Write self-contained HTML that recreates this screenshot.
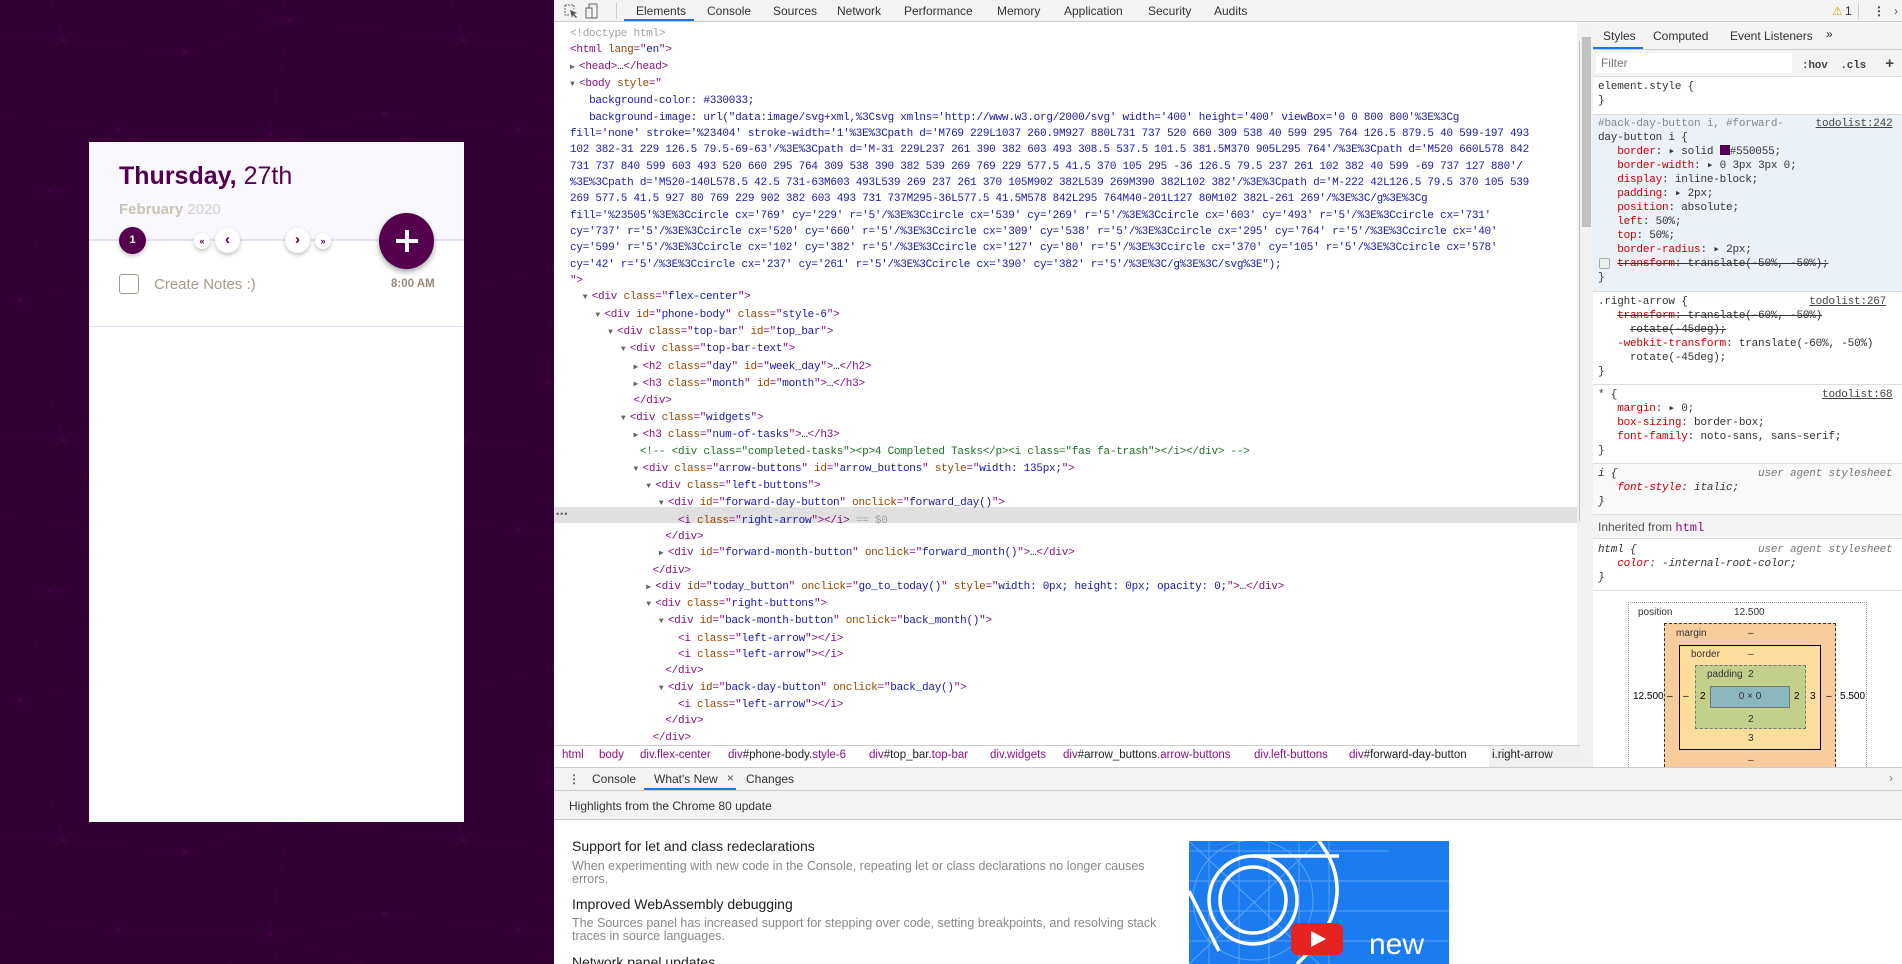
<!DOCTYPE html>
<html style="overflow:hidden;background:#330033"><head><meta charset="utf-8"><style>
*{margin:0;padding:0;box-sizing:border-box}
body{width:1902px;height:964px;overflow:hidden;position:relative;background:#330033;font-family:"Liberation Sans",sans-serif}
.abs{position:absolute}
#bg{position:absolute;left:0;top:0}
#phone{position:absolute;left:89px;top:142px;width:375px;height:680px;background:#fff}
#phone .top{position:absolute;left:0;top:0;width:375px;height:99px;background:#f9f8fe;border-bottom:2px solid #e8e0f0}
.circ{position:absolute;border-radius:50%;background:#fff;box-shadow:0 2px 4px rgba(0,0,0,.25);color:#55004f;font-weight:bold;text-align:center}
#dev{position:absolute;left:554px;top:0;width:1348px;height:964px;background:#fff;overflow:hidden}
.tabs{position:absolute;left:0;top:0;width:1348px;height:22px;background:#f3f3f3;border-bottom:1px solid #ccc;font-size:12px;color:#333}
.tabs span{position:absolute;top:4px}
.code{position:absolute;font-family:"Liberation Mono",monospace;font-size:11px;letter-spacing:-.25px;white-space:pre;line-height:16px;color:#222}
.t{color:#881280}.a{color:#994500}.v{color:#1a1aa6}.c{color:#236e25}.g{color:#a0a0a0}
.ar{display:inline-block;width:9px;font-size:8px;color:#666;letter-spacing:0}
.sty{position:absolute;font-family:"Liberation Mono",monospace;font-size:11px;letter-spacing:-.2px;white-space:pre;line-height:14px;color:#222}
.p{color:#c80000}
.bc{position:absolute;top:749px;font-size:11.5px;color:#881280}
</style></head><body>
<svg id="bg" width="554" height="964"><defs><pattern id="pt" width="400" height="400" patternUnits="userSpaceOnUse"><g transform="scale(.5)"><g fill="none" stroke="#3c003c" stroke-width="2"><path d="M769 229L1037 260.9M927 880L731 737 520 660 309 538 40 599 295 764 126.5 879.5 40 599-197 493 102 382-31 229 126.5 79.5-69-63"/><path d="M-31 229L237 261 390 382 603 493 308.5 537.5 101.5 381.5M370 905L295 764"/><path d="M520 660L578 842 731 737 840 599 603 493 520 660 295 764 309 538 390 382 539 269 769 229 577.5 41.5 370 105 295 -36 126.5 79.5 237 261 102 382 40 599 -69 737 127 880"/><path d="M520-140L578.5 42.5 731-63M603 493L539 269 237 261 370 105M902 382L539 269M390 382L102 382"/><path d="M-222 42L126.5 79.5 370 105 539 269 577.5 41.5 927 80 769 229 902 382 603 493 731 737M295-36L577.5 41.5M578 842L295 764M40-201L127 80M102 382L-261 269"/></g><g fill="#440044"><circle cx="769" cy="229" r="5"/><circle cx="539" cy="269" r="5"/><circle cx="603" cy="493" r="5"/><circle cx="731" cy="737" r="5"/><circle cx="520" cy="660" r="5"/><circle cx="309" cy="538" r="5"/><circle cx="295" cy="764" r="5"/><circle cx="40" cy="599" r="5"/><circle cx="102" cy="382" r="5"/><circle cx="127" cy="80" r="5"/><circle cx="370" cy="105" r="5"/><circle cx="578" cy="42" r="5"/><circle cx="237" cy="261" r="5"/><circle cx="390" cy="382" r="5"/></g></g></pattern></defs><rect width="554" height="964" fill="url(#pt)"/></svg>

<div id="phone">
 <div class="top"></div>
 <div class="abs" style="left:30px;top:20px;font-size:25px;color:#55004f;white-space:nowrap"><b>Thursday,</b> 27th</div>
 <div class="abs" style="left:30px;top:59px;font-size:15px;color:#c9c3b3;white-space:nowrap"><b>February</b> <span style="color:#d3d0c8">2020</span></div>
 <div class="circ" style="left:30px;top:85px;width:27px;height:27px;background:#55004f;color:#fff;font-size:11px;line-height:27px">1</div>
 <div class="circ" style="left:105px;top:91px;width:16px;height:16px;font-size:9px;line-height:16px">«</div>
 <div class="circ" style="left:126px;top:86px;width:25px;height:25px;font-size:15px;line-height:23px">‹</div>
 <div class="circ" style="left:196px;top:86px;width:25px;height:25px;font-size:15px;line-height:23px">›</div>
 <div class="circ" style="left:226px;top:91px;width:16px;height:16px;font-size:9px;line-height:16px">»</div>
 <div class="circ" style="left:290px;top:71px;width:55px;height:56px;background:#55004f;box-shadow:0 3px 6px rgba(0,0,0,.35)"><div class="abs" style="left:17px;top:26px;width:22px;height:4px;background:#fff"></div><div class="abs" style="left:26px;top:17px;width:4px;height:22px;background:#fff"></div></div>
 <div class="abs" style="left:30px;top:132px;width:20px;height:20px;border:1.5px solid #a09a8a;border-radius:3px"></div>
 <div class="abs" style="left:65px;top:134px;font-size:15px;color:#a89a88">Create Notes :)</div>
 <div class="abs" style="left:302px;top:136px;font-size:11.5px;font-weight:bold;color:#9c8a78">8:00 AM</div>
 <div class="abs" style="left:0;top:184px;width:375px;height:1px;background:#e8e0f0"></div>
</div>

<div id="dev">
 <div class="tabs">
  <svg class="abs" style="left:10px;top:4px" width="14" height="14"><path d="M1 1h9v4M1 1v10h4" fill="none" stroke="#666" stroke-dasharray="2 1"/><path d="M6 6l7 3-3 1 3 3-1 1-3-3-1 3z" fill="#555"/></svg>
  <svg class="abs" style="left:31px;top:3px" width="14" height="16"><rect x="4" y="1" width="8" height="14" fill="none" stroke="#666"/><rect x="1" y="5" width="6" height="10" fill="#f3f3f3" stroke="#666"/></svg>
  <div class="abs" style="left:62px;top:3px;width:1px;height:16px;background:#ccc"></div>
  <span style="left:82px;color:#333">Elements</span>
  <div class="abs" style="left:70px;top:19px;width:70px;height:2px;background:#1a73e8"></div>
  <span style="left:153px">Console</span><span style="left:219px">Sources</span><span style="left:283px">Network</span><span style="left:350px">Performance</span><span style="left:443px">Memory</span><span style="left:510px">Application</span><span style="left:594px">Security</span><span style="left:660px">Audits</span>
  <span style="left:1278px;color:#e0a000">⚠</span><span style="left:1291px">1</span>
  <div class="abs" style="left:1304px;top:3px;width:1px;height:16px;background:#ccc"></div>
  <span style="left:1319px;font-weight:bold">⋮</span><span style="left:1340px;color:#555">›</span>
 </div>

 <div class="abs" style="left:0;top:507px;width:1023px;height:16px;background:#e0e0e0"></div>
 <div class="abs" style="left:1023px;top:23px;width:13px;height:722px;background:#f1f1f1"></div>
 <div class="abs" style="left:1025px;top:41px;width:9px;height:480px;background:#c1c1c1"></div>
 <div class="code" style="left:16px;top:26px;line-height:16.33px"><span class="g">&lt;!doctype html&gt;</span>
<span class="t">&lt;html </span><span class="a">lang</span><span class="t">="</span><span class="v">en</span><span class="t">"&gt;</span>
<span class="ar">▶</span><span class="t">&lt;head&gt;</span>…<span class="t">&lt;/head&gt;</span>
<span class="ar">▼</span><span class="t">&lt;body </span><span class="a">style</span><span class="t">="</span>
   <span class="v">background-color: #330033;</span>
   <span class="v">background-image: url("data:image/svg+xml,%3Csvg xmlns='http://www.w3.org/2000/svg' width='400' height='400' viewBox='0 0 800 800'%3E%3Cg</span>
<span class="v">fill='none' stroke='%23404' stroke-width='1'%3E%3Cpath d='M769 229L1037 260.9M927 880L731 737 520 660 309 538 40 599 295 764 126.5 879.5 40 599-197 493</span>
<span class="v">102 382-31 229 126.5 79.5-69-63'/%3E%3Cpath d='M-31 229L237 261 390 382 603 493 308.5 537.5 101.5 381.5M370 905L295 764'/%3E%3Cpath d='M520 660L578 842</span>
<span class="v">731 737 840 599 603 493 520 660 295 764 309 538 390 382 539 269 769 229 577.5 41.5 370 105 295 -36 126.5 79.5 237 261 102 382 40 599 -69 737 127 880'/</span>
<span class="v">%3E%3Cpath d='M520-140L578.5 42.5 731-63M603 493L539 269 237 261 370 105M902 382L539 269M390 382L102 382'/%3E%3Cpath d='M-222 42L126.5 79.5 370 105 539</span>
<span class="v">269 577.5 41.5 927 80 769 229 902 382 603 493 731 737M295-36L577.5 41.5M578 842L295 764M40-201L127 80M102 382L-261 269'/%3E%3C/g%3E%3Cg</span>
<span class="v">fill='%23505'%3E%3Ccircle cx='769' cy='229' r='5'/%3E%3Ccircle cx='539' cy='269' r='5'/%3E%3Ccircle cx='603' cy='493' r='5'/%3E%3Ccircle cx='731'</span>
<span class="v">cy='737' r='5'/%3E%3Ccircle cx='520' cy='660' r='5'/%3E%3Ccircle cx='309' cy='538' r='5'/%3E%3Ccircle cx='295' cy='764' r='5'/%3E%3Ccircle cx='40'</span>
<span class="v">cy='599' r='5'/%3E%3Ccircle cx='102' cy='382' r='5'/%3E%3Ccircle cx='127' cy='80' r='5'/%3E%3Ccircle cx='370' cy='105' r='5'/%3E%3Ccircle cx='578'</span>
<span class="v">cy='42' r='5'/%3E%3Ccircle cx='237' cy='261' r='5'/%3E%3Ccircle cx='390' cy='382' r='5'/%3E%3C/g%3E%3C/svg%3E");</span>
<span class="t">"&gt;</span>
  <span class="ar">▼</span><span class="t">&lt;div </span><span class="a">class</span><span class="t">="</span><span class="v">flex-center</span><span class="t">"&gt;</span>
    <span class="ar">▼</span><span class="t">&lt;div </span><span class="a">id</span><span class="t">="</span><span class="v">phone-body</span><span class="t">" </span><span class="a">class</span><span class="t">="</span><span class="v">style-6</span><span class="t">"&gt;</span>
      <span class="ar">▼</span><span class="t">&lt;div </span><span class="a">class</span><span class="t">="</span><span class="v">top-bar</span><span class="t">" </span><span class="a">id</span><span class="t">="</span><span class="v">top_bar</span><span class="t">"&gt;</span>
        <span class="ar">▼</span><span class="t">&lt;div </span><span class="a">class</span><span class="t">="</span><span class="v">top-bar-text</span><span class="t">"&gt;</span>
          <span class="ar">▶</span><span class="t">&lt;h2 </span><span class="a">class</span><span class="t">="</span><span class="v">day</span><span class="t">" </span><span class="a">id</span><span class="t">="</span><span class="v">week_day</span><span class="t">"&gt;</span>…<span class="t">&lt;/h2&gt;</span>
          <span class="ar">▶</span><span class="t">&lt;h3 </span><span class="a">class</span><span class="t">="</span><span class="v">month</span><span class="t">" </span><span class="a">id</span><span class="t">="</span><span class="v">month</span><span class="t">"&gt;</span>…<span class="t">&lt;/h3&gt;</span>
          <span class="t">&lt;/div&gt;</span>
        <span class="ar">▼</span><span class="t">&lt;div </span><span class="a">class</span><span class="t">="</span><span class="v">widgets</span><span class="t">"&gt;</span>
          <span class="ar">▶</span><span class="t">&lt;h3 </span><span class="a">class</span><span class="t">="</span><span class="v">num-of-tasks</span><span class="t">"&gt;</span>…<span class="t">&lt;/h3&gt;</span>
           <span class="c">&lt;!-- &lt;div class="completed-tasks"&gt;&lt;p&gt;4 Completed Tasks&lt;/p&gt;&lt;i class="fas fa-trash"&gt;&lt;/i&gt;&lt;/div&gt; --&gt;</span>
          <span class="ar">▼</span><span class="t">&lt;div </span><span class="a">class</span><span class="t">="</span><span class="v">arrow-buttons</span><span class="t">" </span><span class="a">id</span><span class="t">="</span><span class="v">arrow_buttons</span><span class="t">" </span><span class="a">style</span><span class="t">="</span><span class="v">width: 135px;</span><span class="t">"&gt;</span>
            <span class="ar">▼</span><span class="t">&lt;div </span><span class="a">class</span><span class="t">="</span><span class="v">left-buttons</span><span class="t">"&gt;</span>
              <span class="ar">▼</span><span class="t">&lt;div </span><span class="a">id</span><span class="t">="</span><span class="v">forward-day-button</span><span class="t">" </span><span class="a">onclick</span><span class="t">="</span><span class="v">forward_day()</span><span class="t">"&gt;</span>
                 <span class="t">&lt;i </span><span class="a">class</span><span class="t">="</span><span class="v">right-arrow</span><span class="t">"&gt;&lt;/i&gt;</span> <span class="g">== $0</span>
               <span class="t">&lt;/div&gt;</span>
              <span class="ar">▶</span><span class="t">&lt;div </span><span class="a">id</span><span class="t">="</span><span class="v">forward-month-button</span><span class="t">" </span><span class="a">onclick</span><span class="t">="</span><span class="v">forward_month()</span><span class="t">"&gt;</span>…<span class="t">&lt;/div&gt;</span>
             <span class="t">&lt;/div&gt;</span>
            <span class="ar">▶</span><span class="t">&lt;div </span><span class="a">id</span><span class="t">="</span><span class="v">today_button</span><span class="t">" </span><span class="a">onclick</span><span class="t">="</span><span class="v">go_to_today()</span><span class="t">" </span><span class="a">style</span><span class="t">="</span><span class="v">width: 0px; height: 0px; opacity: 0;</span><span class="t">"&gt;</span>…<span class="t">&lt;/div&gt;</span>
            <span class="ar">▼</span><span class="t">&lt;div </span><span class="a">class</span><span class="t">="</span><span class="v">right-buttons</span><span class="t">"&gt;</span>
              <span class="ar">▼</span><span class="t">&lt;div </span><span class="a">id</span><span class="t">="</span><span class="v">back-month-button</span><span class="t">" </span><span class="a">onclick</span><span class="t">="</span><span class="v">back_month()</span><span class="t">"&gt;</span>
                 <span class="t">&lt;i </span><span class="a">class</span><span class="t">="</span><span class="v">left-arrow</span><span class="t">"&gt;&lt;/i&gt;</span>
                 <span class="t">&lt;i </span><span class="a">class</span><span class="t">="</span><span class="v">left-arrow</span><span class="t">"&gt;&lt;/i&gt;</span>
               <span class="t">&lt;/div&gt;</span>
              <span class="ar">▼</span><span class="t">&lt;div </span><span class="a">id</span><span class="t">="</span><span class="v">back-day-button</span><span class="t">" </span><span class="a">onclick</span><span class="t">="</span><span class="v">back_day()</span><span class="t">"&gt;</span>
                 <span class="t">&lt;i </span><span class="a">class</span><span class="t">="</span><span class="v">left-arrow</span><span class="t">"&gt;&lt;/i&gt;</span>
               <span class="t">&lt;/div&gt;</span>
             <span class="t">&lt;/div&gt;</span></div>
 <div class="abs" style="left:2px;top:509px;font-size:9px;color:#666;letter-spacing:1px">•••</div>

 <div class="abs" style="left:0;top:745px;width:1037px;height:22px;background:#fff;border-top:1px solid #ccc"></div>
 <div class="abs" style="left:935px;top:746px;width:102px;height:21px;background:#f0f0f0"></div>
 <span class="bc" style="left:8px">html</span><span class="bc" style="left:45px">body</span><span class="bc" style="left:86px">div.flex-center</span><span class="bc" style="left:174px">div<span style="color:#222">#phone-body</span>.style-6</span><span class="bc" style="left:315px">div<span style="color:#222">#top_bar</span>.top-bar</span><span class="bc" style="left:436px">div.widgets</span><span class="bc" style="left:509px">div<span style="color:#222">#arrow_buttons</span>.arrow-buttons</span><span class="bc" style="left:700px">div.left-buttons</span><span class="bc" style="left:795px">div<span style="color:#222">#forward-day-button</span></span><span class="bc" style="left:938px;color:#222">i.right-arrow</span>

 <div class="abs" style="left:1037px;top:23px;width:311px;height:744px;background:#fff;border-left:1px solid #ccc"></div>
 <div class="abs" style="left:1026px;top:23px;width:13px;height:744px;background:#f1f1f1"></div>
 <div class="abs" style="left:1028px;top:37px;width:9px;height:190px;background:#c1c1c1"></div>
 <div class="abs" style="left:1039px;top:23px;width:309px;height:27px;background:#f3f3f3;border-bottom:1px solid #ccc;font-size:12px;color:#333">
  <span class="abs" style="left:10px;top:6px">Styles</span><span class="abs" style="left:60px;top:6px">Computed</span><span class="abs" style="left:137px;top:6px">Event Listeners</span><span class="abs" style="left:233px;top:4px">»</span>
  <div class="abs" style="left:0;top:24px;width:50px;height:2px;background:#1a73e8"></div>
 </div>
 <div class="abs" style="left:1039px;top:50px;width:309px;height:26px;background:#f3f3f3"></div>
 <div class="abs" style="left:1042px;top:53px;width:196px;height:20px;background:#fff;font-size:12px;color:#777;padding:3px 5px">Filter</div>
 <div class="sty" style="left:1248px;top:57px;font-weight:bold;color:#444">:hov  .cls   <span style="font-size:15px;font-family:'Liberation Sans'">+</span></div>
 <div class="abs" style="left:1039px;top:76px;width:309px;height:1px;background:#ddd"></div>
 <div class="abs" style="left:1039px;top:114px;width:309px;height:177px;background:#ecf0f7;border-top:1px solid #ddd"></div>
 <div class="abs" style="left:1039px;top:291px;width:309px;height:1px;background:#ddd"></div>
 <div class="abs" style="left:1039px;top:384px;width:309px;height:1px;background:#ddd"></div>
 <div class="abs" style="left:1039px;top:463px;width:309px;height:76px;background:#f9f9f9;border-top:1px solid #ddd"></div>
 <div class="abs" style="left:1039px;top:514px;width:309px;height:25px;background:#f3f3f3;border-top:1px solid #ddd;border-bottom:1px solid #ddd"></div>
 <div class="abs" style="left:1039px;top:590px;width:309px;height:1px;background:#ddd"></div>
 <div class="sty" style="left:1044px;top:80px;color:#333">element.style {
}</div>
 <div class="sty" style="left:1044px;top:117px;color:#333"><span style="color:#888">#back-day-button i, #forward-</span>     <span style="color:#444;text-decoration:underline">todolist:242</span>
day-button i {
   <span class="p">border</span>: ▸ solid <span style="display:inline-block;width:10px;height:10px;background:#550055;vertical-align:-1px"></span>#550055;
   <span class="p">border-width</span>: ▸ 0 3px 3px 0;
   <span class="p">display</span>: inline-block;
   <span class="p">padding</span>: ▸ 2px;
   <span class="p">position</span>: absolute;
   <span class="p">left</span>: 50%;
   <span class="p">top</span>: 50%;
   <span class="p">border-radius</span>: ▸ 2px;
   <s><span class="p">transform</span>: translate(-50%, -50%);</s>
}</div>
 <div class="abs" style="left:1045px;top:258px;width:11px;height:11px;border:1px solid #aaa;border-radius:2px;background:#eee"></div>
 <div class="sty" style="left:1044px;top:295px;color:#333">.right-arrow {                   <span style="color:#444;text-decoration:underline">todolist:267</span>
   <s><span class="p">transform</span>: translate(-60%, -50%)</s>
     <s>rotate(-45deg);</s>
   <span class="p">-webkit-transform</span>: translate(-60%, -50%)
     rotate(-45deg);
}</div>
 <div class="sty" style="left:1044px;top:388px;color:#333">* {                                <span style="color:#444;text-decoration:underline">todolist:68</span>
   <span class="p">margin</span>: ▸ 0;
   <span class="p">box-sizing</span>: border-box;
   <span class="p">font-family</span>: noto-sans, sans-serif;
}</div>
 <div class="sty" style="left:1044px;top:467px;color:#333;font-style:italic">i {                      <span style="color:#777">user agent stylesheet</span>
   <span class="p">font-style</span>: italic;
}</div>
 <div class="abs" style="left:1044px;top:520px;font-size:12px;color:#555">Inherited from <span style="font-family:'Liberation Mono';color:#881280">html</span></div>
 <div class="sty" style="left:1044px;top:543px;color:#333;font-style:italic">html {                   <span style="color:#777">user agent stylesheet</span>
   <span class="p">color</span>: -internal-root-color;
}</div>
 <div class="abs" style="left:1074px;top:602px;width:239px;height:165px;border:1px dotted #999;border-bottom:none;font-size:10px;color:#333">
  <span class="abs" style="left:9px;top:4px">position</span><span class="abs" style="left:105px;top:4px">12.500</span>
 </div>
 <div class="abs" style="left:1110px;top:623px;width:172px;height:144px;background:#f9cc9d;border:1px dashed #333;border-bottom:none;font-size:10px;color:#333">
  <span class="abs" style="left:11px;top:4px">margin</span><span class="abs" style="left:83px;top:4px">–</span><span class="abs" style="left:83px;top:131px">–</span>
 </div>
 <div class="abs" style="left:1125px;top:645px;width:142px;height:105px;background:#fddd9b;border:1px solid #000;font-size:10px;color:#333">
  <span class="abs" style="left:11px;top:3px">border</span><span class="abs" style="left:68px;top:3px">–</span><span class="abs" style="left:68px;top:87px">3</span>
 </div>
 <div class="abs" style="left:1141px;top:665px;width:111px;height:64px;background:#c3d08b;border:1px dashed #777;font-size:10px;color:#333">
  <span class="abs" style="left:11px;top:3px">padding</span><span class="abs" style="left:52px;top:3px">2</span><span class="abs" style="left:52px;top:48px">2</span>
 </div>
 <div class="abs" style="left:1156px;top:686px;width:80px;height:22px;background:#8cb6c0;border:1px solid #777;font-size:10px;color:#333;text-align:center;line-height:20px">0 × 0</div>
 <span class="abs" style="left:1079px;top:691px;font-size:10px">12.500</span>
 <span class="abs" style="left:1113px;top:691px;font-size:10px">–</span><span class="abs" style="left:1129px;top:691px;font-size:10px">–</span><span class="abs" style="left:1146px;top:691px;font-size:10px">2</span>
 <span class="abs" style="left:1240px;top:691px;font-size:10px">2</span><span class="abs" style="left:1256px;top:691px;font-size:10px">3</span><span class="abs" style="left:1272px;top:691px;font-size:10px">–</span><span class="abs" style="left:1286px;top:691px;font-size:10px">5.500</span>

 <div class="abs" style="left:0;top:767px;width:1348px;height:24px;background:#f3f3f3;border-top:1px solid #ccc;border-bottom:1px solid #ccc;font-size:12px;color:#333">
  <span class="abs" style="left:14px;top:4px;font-weight:bold;color:#666">⋮</span>
  <span class="abs" style="left:38px;top:4px">Console</span><span class="abs" style="left:100px;top:4px">What's New</span><span class="abs" style="left:173px;top:3px;color:#555">×</span><span class="abs" style="left:192px;top:4px">Changes</span>
  <div class="abs" style="left:90px;top:20px;width:92px;height:2px;background:#1a73e8"></div>
  <span class="abs" style="left:1335px;top:3px;color:#777">›</span>
 </div>
 <div class="abs" style="left:0;top:791px;width:1348px;height:29px;background:#f3f3f3;border-bottom:1px solid #ccc;font-size:12px;color:#333;padding:8px 15px">Highlights from the Chrome 80 update</div>
 <div class="abs" style="left:18px;top:838px;font-size:14px;color:#222">Support for let and class redeclarations</div>
 <div class="abs" style="left:18px;top:860px;width:580px;font-size:12.5px;line-height:13px;color:#888">When experimenting with new code in the Console, repeating let or class declarations no longer causes errors.</div>
 <div class="abs" style="left:18px;top:896px;font-size:14px;color:#222">Improved WebAssembly debugging</div>
 <div class="abs" style="left:18px;top:917px;width:590px;font-size:12.5px;line-height:13px;color:#888">The Sources panel has increased support for stepping over code, setting breakpoints, and resolving stack traces in source languages.</div>
 <div class="abs" style="left:18px;top:954px;font-size:14px;color:#222">Network panel updates</div>
 <svg class="abs" style="left:635px;top:841px" width="260" height="123">
  <rect width="260" height="123" fill="#1a7cf0"/>
  <g stroke="#5da2f5" stroke-width="1" fill="none"><path d="M0 10H200M0 40H260M0 70H260M0 100H260M20 0V123M50 0V123M80 0V123M110 0V123M140 0V123"/><path d="M0 0L130 123M130 0L0 123"/><circle cx="64" cy="59" r="60"/></g>
  <g stroke="#fff" stroke-width="3.5" fill="none"><circle cx="64" cy="59" r="33"/><circle cx="64" cy="59" r="44"/><path d="M64 15H150M130 0Q175 60 108 123M0 50L30 110"/></g>
  <rect x="102" y="82" width="52" height="32" rx="7" fill="#e52320"/><path d="M122 90L137 98 122 106z" fill="#fff"/>
  <text x="180" y="113" fill="#fff" font-size="30" font-family="Liberation Sans">new</text>
 </svg>
</div>
</body></html>
